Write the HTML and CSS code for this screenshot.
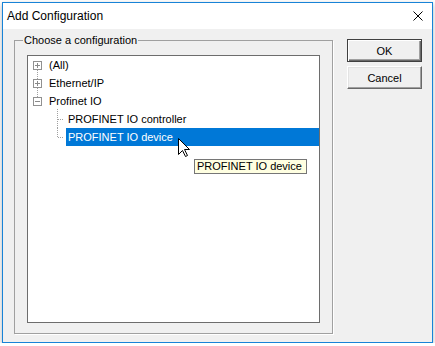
FILE: index.html
```html
<!DOCTYPE html>
<html lang="en">
<head>
    <meta charset="UTF-8">
    <title>Add Configuration</title>
    <link rel="stylesheet" href="styles.css">
</head>
<body>
    <!-- Dialog window -->
    <div class="window">
        <div class="titlebar">
            <span class="title">Add Configuration</span>
            <svg class="close" width="10" height="10" viewBox="0 0 10 10">
                <path d="M0.5 0.5 L9.5 9.5 M9.5 0.5 L0.5 9.5" stroke="#000" stroke-width="1" fill="none"/>
            </svg>
        </div>

        <div class="client">
            <fieldset class="group">
                <legend>Choose a configuration</legend>

                <!-- Tree view -->
                <div class="tree">
                    <ul>
                        <li class="node has-next">
                            <span class="exp"><span class="box plus"></span></span>
                            <span class="label">(All)</span>
                        </li>
                        <li class="node has-next">
                            <span class="exp"><span class="box plus"></span></span>
                            <span class="label">Ethernet/IP</span>
                        </li>
                        <li class="node">
                            <span class="exp"><span class="box"></span></span>
                            <span class="label">Profinet IO</span>
                        </li>
                        <li class="node child">
                            <span class="twig"></span>
                            <span class="label">PROFINET IO controller</span>
                        </li>
                        <li class="node child last">
                            <span class="twig"></span>
                            <span class="label selected">PROFINET IO device</span>
                        </li>
                    </ul>

                    <div class="tooltip">PROFINET IO device</div>

                    <svg class="cursor" width="13" height="20" viewBox="0 0 13 20">
                        <path d="M0.5 0.5 L0.5 16.5 L4.5 12.5 L7.5 18.5 L9.5 17.5 L6.5 11.5 L11.5 11.5 Z" fill="#fff" stroke="#000" stroke-width="1" stroke-linejoin="miter"/>
                    </svg>
                </div>
            </fieldset>

            <div class="buttons">
                <button class="btn default">OK</button>
                <button class="btn">Cancel</button>
            </div>
        </div>
    </div>
</body>
</html>
```

FILE: styles.css
```css
/* Global Styles */
* {
    margin: 0;
    padding: 0;
    box-sizing: border-box;
}

body {
    font-family: "Liberation Sans", Arial, sans-serif;
    font-size: 11px;
    background-color: #fff;
    color: #000;
}

/* Window frame */
.window {
    width: 431px;
    height: 341px;
    margin: 2px 0 0 2px;
    border: 1px solid #1883d7;
    display: flex;
    flex-direction: column;
    box-shadow: 0 2px 5px rgba(0, 0, 0, 0.3);
}

.titlebar {
    height: 26px;
    background-color: #fff;
    display: flex;
    align-items: center;
    justify-content: space-between;
    padding: 0 9px 0 4px;
}

.title {
    font-size: 12px;
}

.close {
    display: block;
}

/* Client area */
.client {
    flex: 1;
    background-color: #f0f0f0;
    display: flex;
    align-items: flex-start;
}

.group {
    margin: 4px 0 0 11px;
    padding: 8px 12px 10px 12px;
    border: 1px solid #a0a0a0;
    box-shadow: 1px 1px 0 #fff;
}

.group legend {
    margin-left: -4px;
    padding: 0 1px;
    line-height: 14px;
}

/* Tree view */
.tree {
    position: relative;
    width: 293px;
    height: 268px;
    background-color: #fff;
    border: 1px solid #6d6d6d;
}

.tree ul {
    list-style-type: none;
}

.node {
    height: 18px;
    display: flex;
    align-items: center;
}

.exp {
    position: relative;
    width: 9px;
    height: 18px;
    margin-left: 5px;
    margin-right: 5px;
    display: flex;
    align-items: center;
}

.box {
    position: relative;
    width: 9px;
    height: 9px;
    border: 1px solid #919191;
    background-color: #fff;
}

.box::before {
    content: "";
    position: absolute;
    left: 1px;
    top: 3px;
    width: 5px;
    height: 1px;
    background-color: #8a8a8a;
}

.box.plus::after {
    content: "";
    position: absolute;
    left: 3px;
    top: 1px;
    width: 1px;
    height: 5px;
    background-color: #8a8a8a;
}

.has-next .exp::after {
    content: "";
    position: absolute;
    left: 4px;
    top: 14px;
    height: 9px;
    border-left: 1px dotted #a0a0a0;
}

.child {
    padding-left: 29px;
}

.twig {
    position: relative;
    width: 6px;
    height: 18px;
    margin-right: 3px;
}

.twig::before {
    content: "";
    position: absolute;
    left: 0;
    top: -1px;
    height: 19px;
    border-left: 1px dotted #a0a0a0;
}

.last .twig::before {
    height: 10px;
}

.twig::after {
    content: "";
    position: absolute;
    left: 1px;
    top: 9px;
    width: 5px;
    border-top: 1px dotted #a0a0a0;
}

.label {
    padding: 0 2px;
    line-height: 18px;
    white-space: nowrap;
}

.label.selected {
    flex: 1;
    background-color: #0078d7;
    color: #fff;
}

/* Tooltip and mouse pointer */
.tooltip {
    position: absolute;
    left: 166px;
    top: 103px;
    height: 15px;
    padding: 0 4px 0 2px;
    line-height: 13px;
    background-color: #ffffe1;
    border: 1px solid #767676;
    white-space: nowrap;
}

.cursor {
    position: absolute;
    left: 150px;
    top: 82px;
}

/* Buttons */
.buttons {
    margin: 10px 0 0 14px;
    display: flex;
    flex-direction: column;
    gap: 4px;
}

.btn {
    width: 75px;
    height: 23px;
    font-family: "Liberation Sans", Arial, sans-serif;
    font-size: 11px;
    color: #000;
    background-color: #f0f0f0;
    border: 1px solid;
    border-color: #fff #696969 #696969 #fff;
    box-shadow: inset -1px -1px 0 #a0a0a0, inset 1px 1px 0 #e3e3e3;
}

.btn.default {
    border: 1px solid #404040;
    box-shadow: inset 1px 1px 0 #fff, inset -1px -1px 0 #696969, inset -2px -2px 0 #a0a0a0;
}
```
